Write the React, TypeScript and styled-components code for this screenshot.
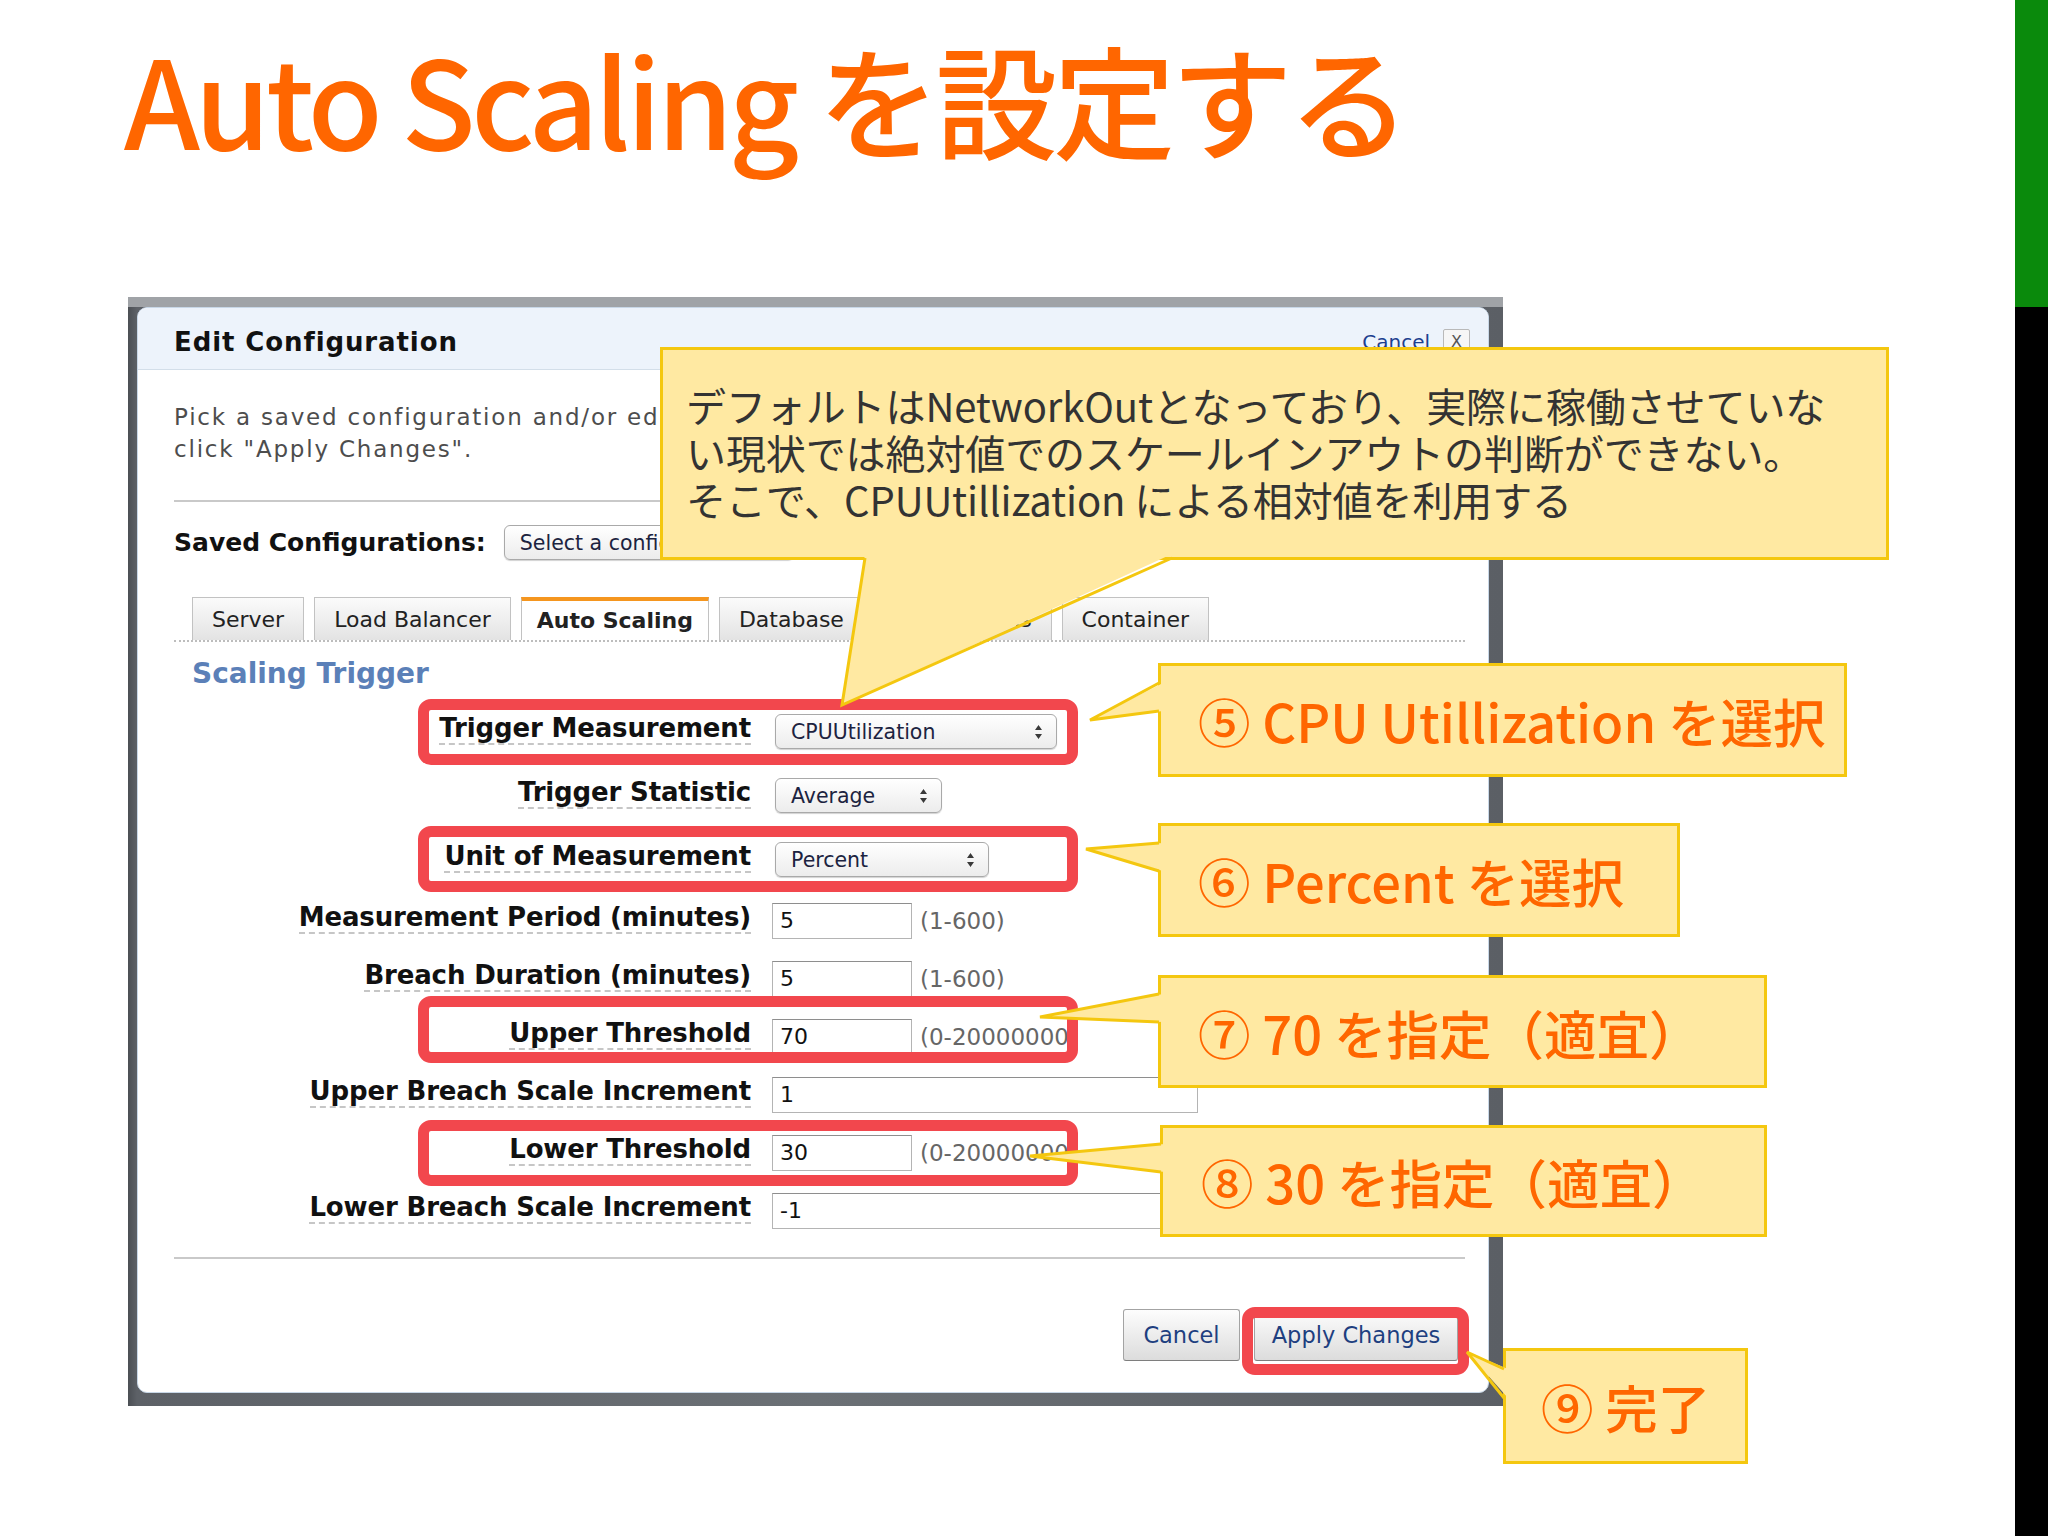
import React from "react";
import styled, { createGlobalStyle } from "styled-components";

const JP = `"Noto Sans CJK JP", "Noto Sans", sans-serif`;
const UI = `"DejaVu Sans", Verdana, sans-serif`;

const GlobalStyle = createGlobalStyle`
  html, body {
    margin: 0;
    padding: 0;
    background: #fff;
  }
  body {
    font-family: ${UI};
  }
  * {
    box-sizing: border-box;
  }
`;

const Slide = styled.div`
  position: relative;
  width: 2048px;
  height: 1536px;
  overflow: hidden;
  display: flex;
  background: #fff;
`;

const Main = styled.main`
  flex: 1;
  padding-top: 35px;
`;

const Title = styled.h1`
  margin: 0 0 138px;
  padding-left: 124px;
  font-family: ${JP};
  font-weight: 500;
  font-size: 122px;
  line-height: 124px;
  color: #ff6600;
  white-space: nowrap;
  letter-spacing: -4.4px;
`;

const SideStrip = styled.aside`
  width: 33px;
  display: flex;
  flex-direction: column;
  background: #000;
`;

const StripAccent = styled.div`
  height: 307px;
  background: #0a8a0c;
`;

/* screenshot of the AWS console dialog */

const Frame = styled.section`
  width: 1375px;
  margin-left: 128px;
  background: linear-gradient(90deg, #4b4f54 0, #5d6167 9px, #6b7075 50%, #5b5f65 100%);
  border-top: 10px solid #a0a3a7;
  padding: 0 14px 13px 9px;
`;

const Dialog = styled.div`
  background: #fff;
  border: 1px solid #c8d7e7;
  border-radius: 10px;
  overflow: hidden;
  font-family: ${UI};
  color: #111;
`;

const Header = styled.header`
  height: 62px;
  display: flex;
  align-items: center;
  justify-content: space-between;
  padding: 6px 18px 0 36px;
  background: #edf3fb;
  border-bottom: 1px solid #d3dee9;
`;

const HeaderTitle = styled.h2`
  margin: 0;
  font-size: 26px;
  font-weight: bold;
  letter-spacing: 0.9px;
`;

const HeaderClose = styled.div`
  display: flex;
  align-items: center;
  gap: 13px;
`;

const CancelLink = styled.span`
  font-size: 20px;
  color: #1d3f8f;
`;

const CloseBox = styled.span`
  width: 27px;
  height: 25px;
  display: inline-flex;
  align-items: center;
  justify-content: center;
  border: 1px solid #b9b9b9;
  border-radius: 2px;
  background: #f6f6f6;
  color: #555;
  font-size: 16px;
`;

const Body = styled.div`
  padding: 0 23px 31px 36px;
`;

const Intro = styled.p`
  margin: 31px 0 0;
  font-size: 23px;
  line-height: 32px;
  letter-spacing: 1.8px;
  color: #4d4d4d;
  white-space: nowrap;
`;

const Rule = styled.hr<{ $gap: number }>`
  margin: ${(p) => p.$gap}px 0 0;
  height: 2px;
  border: none;
  background: #c9c9c9;
`;

const SavedRow = styled.div`
  margin-top: 24px;
  height: 33px;
  display: flex;
  align-items: center;
  gap: 18px;
`;

const SavedLabel = styled.span`
  font-size: 25px;
  font-weight: bold;
`;

const SelectBox = styled.div<{ $width: number }>`
  width: ${(p) => p.$width}px;
  height: 35px;
  display: flex;
  align-items: center;
  justify-content: space-between;
  padding: 0 13px 0 15px;
  border: 1px solid #a9a9a9;
  border-radius: 6px;
  background: linear-gradient(#ffffff, #ececec);
  box-shadow: 0 1px 1px rgba(0, 0, 0, 0.18);
  font-size: 20.5px;
  color: #1c2340;
  white-space: nowrap;
  overflow: hidden;
`;

const TabBar = styled.nav`
  margin-top: 38px;
  height: 45px;
  display: flex;
  align-items: flex-end;
  gap: 10px;
  padding-left: 18px;
  border-bottom: 2px dotted #bdbdbd;
`;

const Tab = styled.div<{ $active?: boolean }>`
  height: 43px;
  display: flex;
  align-items: center;
  padding: 0 ${(p) => (p.$active ? 15 : 19)}px;
  font-size: 22px;
  font-weight: ${(p) => (p.$active ? "bold" : "normal")};
  color: #222;
  white-space: nowrap;
  border: 1px solid #c2c2c2;
  border-bottom: none;
  border-top: ${(p) => (p.$active ? "4px solid #f5961f" : "1px solid #c2c2c2")};
  background: ${(p) => (p.$active ? "#fff" : "linear-gradient(#fbfbfb, #e3e3e3)")};
`;

const SectionTitle = styled.h3`
  margin: 15px 0 0 18px;
  line-height: 34px;
  font-size: 28px;
  font-weight: bold;
  color: #5b80b8;
`;

const Form = styled.div`
  margin-top: 4px;
  display: grid;
  grid-template-columns: 577px 1fr;
  grid-template-rows: repeat(3, 64px) repeat(6, 58px);
  column-gap: 21px;
`;

const FieldLabel = styled.span`
  justify-self: end;
  align-self: center;
  margin-top: 5px;
  font-size: 26px;
  font-weight: bold;
  letter-spacing: -0.15px;
  line-height: 28px;
  padding-bottom: 1px;
  border-bottom: 2px dashed #c6c6c6;
  white-space: nowrap;
`;

const Control = styled.div<{ $select?: boolean }>`
  display: flex;
  align-items: center;
  gap: 8px;
  padding-top: 9px;
  padding-left: ${(p) => (p.$select ? 3 : 0)}px;
`;

const TextInput = styled.input<{ $width: number }>`
  width: ${(p) => p.$width}px;
  height: 36px;
  padding: 0 7px;
  border: 1px solid #b4b4b4;
  border-top-color: #8e8e8e;
  background: #fff;
  font-family: ${UI};
  font-size: 22px;
  color: #111;
  outline: none;
`;

const Hint = styled.span`
  font-size: 23px;
  color: #666;
  white-space: nowrap;
`;

const ButtonRow = styled.div`
  margin-top: 50px;
  display: flex;
  justify-content: flex-end;
  gap: 14px;
  padding-right: 7px;
`;

const Button = styled.button<{ $width: number }>`
  width: ${(p) => p.$width}px;
  height: 52px;
  border: 1px solid #a3a3a3;
  border-bottom-color: #7e7e7e;
  border-radius: 3px;
  background: linear-gradient(#fdfdfd, #dcdcdc);
  font-family: ${UI};
  font-size: 22.5px;
  color: #1e3f80;
`;

/* slide annotations laid over the screenshot */

const Overlay = styled.div`
  position: absolute;
  inset: 0;
  pointer-events: none;
`;

type Box = { $x: number; $y: number; $w: number; $h: number };

const Highlight = styled.div<Box>`
  position: absolute;
  left: ${(p) => p.$x}px;
  top: ${(p) => p.$y}px;
  width: ${(p) => p.$w}px;
  height: ${(p) => p.$h}px;
  border: 11px solid #f2474d;
  border-radius: 13px;
`;

const Callout = styled.div<Box & { $pad: number }>`
  position: absolute;
  left: ${(p) => p.$x}px;
  top: ${(p) => p.$y}px;
  width: ${(p) => p.$w}px;
  height: ${(p) => p.$h}px;
  display: flex;
  align-items: center;
  padding-left: ${(p) => p.$pad}px;
  background: #ffe9a2;
  border: 3px solid #f4c70f;
  font-family: ${JP};
  font-weight: 500;
  font-size: 52.5px;
  color: #ff6600;
  white-space: nowrap;
`;

const NoteCallout = styled(Callout)`
  display: block;
  padding-top: 32px;
  font-weight: 400;
  font-size: 40px;
  line-height: 47px;
  color: #333;
  letter-spacing: -0.1px;
`;

const Tails = styled.svg`
  position: absolute;
  left: 0;
  top: 0;
`;

const Arrows = () => (
  <svg width="9" height="16" viewBox="0 0 9 16">
    <path d="M4.5 1 L8 6 H1 Z M4.5 15 L8 10 H1 Z" fill="#3a3a3a" />
  </svg>
);

type Field = {
  label: string;
  kind: "select" | "input";
  value: string;
  width: number;
  hint?: string;
};

const fields: Field[] = [
  { label: "Trigger Measurement", kind: "select", value: "CPUUtilization", width: 282 },
  { label: "Trigger Statistic", kind: "select", value: "Average", width: 167 },
  { label: "Unit of Measurement", kind: "select", value: "Percent", width: 214 },
  { label: "Measurement Period (minutes)", kind: "input", value: "5", width: 140, hint: "(1-600)" },
  { label: "Breach Duration (minutes)", kind: "input", value: "5", width: 140, hint: "(1-600)" },
  { label: "Upper Threshold", kind: "input", value: "70", width: 140, hint: "(0-20000000)" },
  { label: "Upper Breach Scale Increment", kind: "input", value: "1", width: 426 },
  { label: "Lower Threshold", kind: "input", value: "30", width: 140, hint: "(0-20000000)" },
  { label: "Lower Breach Scale Increment", kind: "input", value: "-1", width: 426 },
];

const tabs = ["Server", "Load Balancer", "Auto Scaling", "Database", "Notifications", "Container"];

const highlights = [
  { x: 418, y: 699, w: 660, h: 66 },
  { x: 418, y: 826, w: 660, h: 66 },
  { x: 418, y: 996, w: 660, h: 67 },
  { x: 418, y: 1120, w: 660, h: 66 },
  { x: 1242, y: 1307, w: 227, h: 68 },
];

const steps = [
  { x: 1158, y: 663, w: 689, h: 114, pad: 37, text: "⑤ CPU Utillization を選択" },
  { x: 1158, y: 823, w: 522, h: 114, pad: 37, text: "⑥ Percent を選択" },
  { x: 1158, y: 975, w: 609, h: 113, pad: 37, text: "⑦ 70 を指定（適宜）" },
  { x: 1160, y: 1125, w: 607, h: 112, pad: 38, text: "⑧ 30 を指定（適宜）" },
  { x: 1503, y: 1348, w: 245, h: 116, pad: 35, text: "⑨ 完了" },
];

// [base1 x, y, tip x, y, base2 x, y, inward dx, dy]
const tails: [number, number, number, number, number, number, number, number][] = [
  [865, 558, 842, 705, 1172, 558, 0, -4],
  [1159, 683, 1090, 720, 1159, 711, 4, 0],
  [1159, 843, 1086, 849, 1159, 871, 4, 0],
  [1159, 994, 1040, 1017, 1159, 1022, 4, 0],
  [1161, 1144, 1030, 1156, 1161, 1172, 4, 0],
  [1504, 1369, 1467, 1352, 1504, 1398, 4, 0],
];

export default function App() {
  return (
    <>
      <GlobalStyle />
      <Slide>
        <Main>
          <Title>Auto Scaling を設定する</Title>
          <Frame>
            <Dialog>
              <Header>
                <HeaderTitle>Edit Configuration</HeaderTitle>
                <HeaderClose>
                  <CancelLink>Cancel</CancelLink>
                  <CloseBox>X</CloseBox>
                </HeaderClose>
              </Header>
              <Body>
                <Intro>
                  Pick a saved configuration and/or edit the settings below, then
                  <br />
                  click "Apply Changes".
                </Intro>
                <Rule $gap={35} />
                <SavedRow>
                  <SavedLabel>Saved Configurations:</SavedLabel>
                  <SelectBox $width={290}>
                    Select a configuration
                    <Arrows />
                  </SelectBox>
                </SavedRow>
                <TabBar>
                  {tabs.map((t) => (
                    <Tab key={t} $active={t === "Auto Scaling"}>
                      {t}
                    </Tab>
                  ))}
                </TabBar>
                <SectionTitle>Scaling Trigger</SectionTitle>
                <Form>
                  {fields.map((f) => (
                    <React.Fragment key={f.label}>
                      <FieldLabel>{f.label}</FieldLabel>
                      <Control $select={f.kind === "select"}>
                        {f.kind === "select" ? (
                          <SelectBox $width={f.width}>
                            {f.value}
                            <Arrows />
                          </SelectBox>
                        ) : (
                          <TextInput $width={f.width} value={f.value} readOnly />
                        )}
                        {f.hint && <Hint>{f.hint}</Hint>}
                      </Control>
                    </React.Fragment>
                  ))}
                </Form>
                <Rule $gap={22} />
                <ButtonRow>
                  <Button $width={117}>Cancel</Button>
                  <Button $width={204}>Apply Changes</Button>
                </ButtonRow>
              </Body>
            </Dialog>
          </Frame>
        </Main>
        <SideStrip>
          <StripAccent />
        </SideStrip>

        <Overlay>
          {highlights.map((h, i) => (
            <Highlight key={i} $x={h.x} $y={h.y} $w={h.w} $h={h.h} />
          ))}
          <NoteCallout $x={660} $y={347} $w={1229} $h={213} $pad={23}>
            デフォルトはNetworkOutとなっており、実際に稼働させていな
            <br />
            い現状では絶対値でのスケールインアウトの判断ができない。
            <br />
            そこで、CPUUtillization による相対値を利用する
          </NoteCallout>
          {steps.map((s) => (
            <Callout key={s.text} $x={s.x} $y={s.y} $w={s.w} $h={s.h} $pad={s.pad}>
              {s.text}
            </Callout>
          ))}
          <Tails width="2048" height="1536" viewBox="0 0 2048 1536">
            {tails.map(([ax, ay, tx, ty, bx, by, dx, dy], i) => (
              <g key={i}>
                <polygon
                  points={`${ax + dx},${ay + dy} ${tx},${ty} ${bx + dx},${by + dy}`}
                  fill="#ffe9a2"
                />
                <polyline
                  points={`${ax},${ay} ${tx},${ty} ${bx},${by}`}
                  fill="none"
                  stroke="#f4c70f"
                  strokeWidth="3"
                />
              </g>
            ))}
          </Tails>
        </Overlay>
      </Slide>
    </>
  );
}
